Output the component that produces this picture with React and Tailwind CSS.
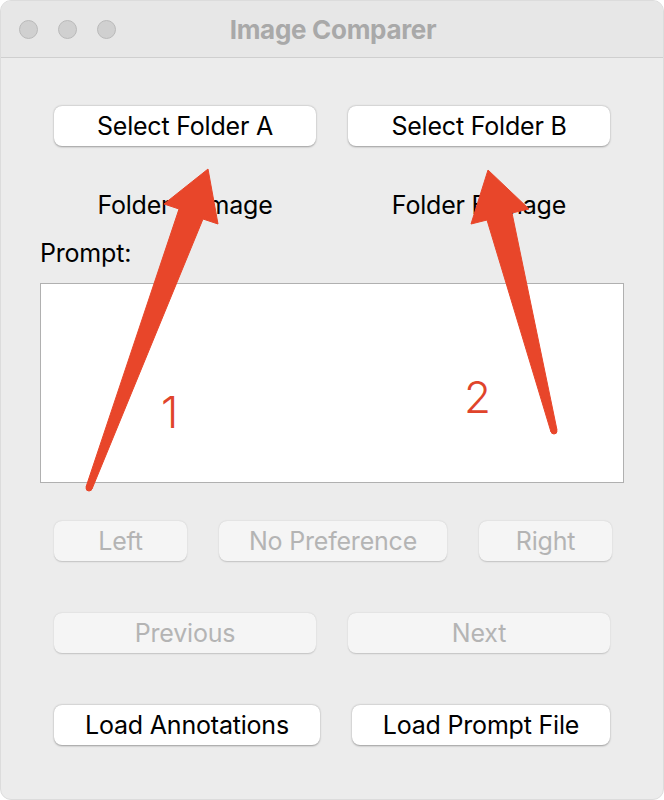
import React from "react";

const font = { fontFamily: "Inter, 'Noto Sans', sans-serif" };

const Btn = ({ children, className = "", disabled = false }) => (
  <button
    className={
      "h-[40px] rounded-[8px] flex items-center justify-center text-[25px] leading-none tracking-[-0.2px] " +
      (disabled
        ? "bg-[#f5f5f5] text-[#b4b4b4] shadow-[0_0.5px_1.5px_rgba(0,0,0,0.18)] "
        : "bg-white text-black shadow-[0_0.5px_2px_rgba(0,0,0,0.35)] ") +
      className
    }
  >
    {children}
  </button>
);

const Arrows = () => (
  <svg className="absolute inset-0 pointer-events-none" width="664" height="800" viewBox="0 0 664 800">
    <g fill="#e8462a" stroke="#e8462a" strokeLinejoin="round" strokeWidth="1">
      <polygon points="207,168 217,223 202,218 91,488 85,486 178,208 163,203" />
      <circle cx="88" cy="487" r="3" />
      <polygon points="487,169 528,208 511,212 556,429 550,431 486,219 470,223" />
      <circle cx="553" cy="430" r="3" />
    </g>
  </svg>
);

export default function App() {
  return (
    <div className="w-[664px] h-[800px] bg-white" style={font}>
      <div className="relative w-[664px] h-[800px] rounded-[11px] overflow-hidden bg-[#ececec] border border-[#dcdcdc]">
        <div className="h-[57px] bg-[#e7e7e7] border-b border-[#cfcfcf] flex items-center relative">
          <div className="flex gap-[20px] pl-[18px]">
            <span className="w-[19px] h-[19px] rounded-full bg-[#d0d0d0] border border-[#bababa]" />
            <span className="w-[19px] h-[19px] rounded-full bg-[#d0d0d0] border border-[#bababa]" />
            <span className="w-[19px] h-[19px] rounded-full bg-[#d0d0d0] border border-[#bababa]" />
          </div>
          <div className="absolute inset-0 flex items-center justify-center text-[26px] font-bold text-[#a9a9a9] pl-[2px] tracking-[-0.3px]">
            Image Comparer
          </div>
        </div>

        <div className="flex flex-col">
          <div className="flex gap-[32px] pl-[53px] mt-[48px]">
            <Btn className="w-[262px] text-[24px]">Select Folder A</Btn>
            <Btn className="w-[262px] text-[24px]">Select Folder B</Btn>
          </div>

          <div className="flex gap-[32px] pl-[53px] mt-[44px] text-[25px] text-black leading-[30px] tracking-[-0.2px]">
            <div className="w-[262px] text-center">Folder A Image</div>
            <div className="w-[262px] text-center">Folder B Image</div>
          </div>

          <div className="pl-[39px] mt-[18px] text-[25px] leading-[30px] text-black tracking-[-0.2px]">Prompt:</div>

          <div className="ml-[39px] mt-[15px] w-[584px] h-[200px] bg-white border border-[#b0b0b0]" />

          <div className="flex gap-[32px] pl-[53px] mt-[38px]">
            <Btn disabled className="w-[133px]">Left</Btn>
            <Btn disabled className="w-[228px]">No Preference</Btn>
            <Btn disabled className="w-[133px]">Right</Btn>
          </div>

          <div className="flex gap-[32px] pl-[53px] mt-[52px]">
            <Btn disabled className="w-[262px]">Previous</Btn>
            <Btn disabled className="w-[262px]">Next</Btn>
          </div>

          <div className="flex gap-[32px] pl-[53px] mt-[52px]">
            <Btn className="w-[266px]">Load Annotations</Btn>
            <Btn className="w-[258px]">Load Prompt File</Btn>
          </div>
        </div>

        <Arrows />
        <div className="absolute left-[160px] top-[386px] text-[44px] leading-[50px] text-[#e0442b] font-light">1</div>
        <div className="absolute left-[463px] top-[371px] text-[44px] leading-[50px] text-[#e0442b] font-light">2</div>
      </div>
    </div>
  );
}
